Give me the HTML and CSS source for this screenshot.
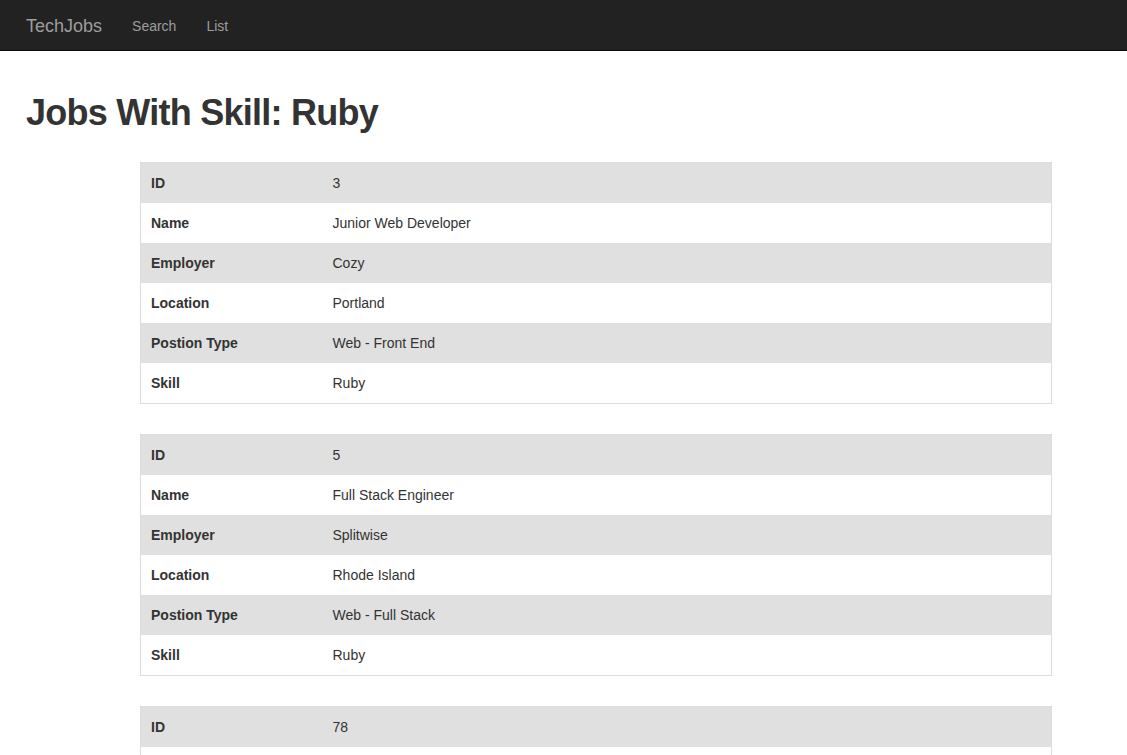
FILE: index.html
```html
<!DOCTYPE html>
<html lang="en">
<head>
<meta charset="utf-8">
<title>TechJobs</title>
<link rel="stylesheet" href="styles.css">
</head>
<body>
<nav class="navbar">
  <a class="brand" href="#">TechJobs</a>
  <ul class="nav-links">
    <li><a href="#">Search</a></li>
    <li><a href="#">List</a></li>
  </ul>
</nav>
<main class="content">
  <h1 class="title">Jobs With Skill: Ruby</h1>
  <div class="jobs">
    <table class="job">
      <tr><th>ID</th><td>3</td></tr>
      <tr><th>Name</th><td>Junior Web Developer</td></tr>
      <tr><th>Employer</th><td>Cozy</td></tr>
      <tr><th>Location</th><td>Portland</td></tr>
      <tr><th>Postion Type</th><td>Web - Front End</td></tr>
      <tr><th>Skill</th><td>Ruby</td></tr>
    </table>
    <table class="job">
      <tr><th>ID</th><td>5</td></tr>
      <tr><th>Name</th><td>Full Stack Engineer</td></tr>
      <tr><th>Employer</th><td>Splitwise</td></tr>
      <tr><th>Location</th><td>Rhode Island</td></tr>
      <tr><th>Postion Type</th><td>Web - Full Stack</td></tr>
      <tr><th>Skill</th><td>Ruby</td></tr>
    </table>
    <table class="job">
      <tr><th>ID</th><td>78</td></tr>
      <tr><th>Name</th><td>Ruby Developer</td></tr>
      <tr><th>Employer</th><td>LaunchCode</td></tr>
      <tr><th>Location</th><td>St. Louis</td></tr>
      <tr><th>Postion Type</th><td>Web - Back End</td></tr>
      <tr><th>Skill</th><td>Ruby</td></tr>
    </table>
  </div>
</main>
</body>
</html>
```

FILE: styles.css
```css
* { box-sizing: border-box; }
html, body { margin: 0; padding: 0; }
body {
  font-family: "Liberation Sans", Arial, Helvetica, sans-serif;
  font-size: 14px;
  line-height: 20px;
  color: #333;
  background: #fff;
}
.navbar {
  height: 51px;
  background: #222;
  border-bottom: 1px solid #080808;
  display: flex;
  align-items: center;
  padding: 2px 0 0 26px;
}
.brand {
  font-size: 18px;
  color: #9d9d9d;
  text-decoration: none;
  line-height: 20px;
  margin-right: 30px;
}
.nav-links {
  list-style: none;
  margin: 0;
  padding: 0;
  display: flex;
  gap: 30px;
}
.nav-links a {
  color: #9d9d9d;
  text-decoration: none;
  font-size: 14px;
}
.content {
  padding: 0 0 0 26px;
}
.title {
  margin: 42px 0 29px;
  font-size: 36px;
  line-height: 40px;
  font-weight: bold;
  letter-spacing: -0.75px;
  color: #333;
}
.jobs {
  margin-left: 114px;
  width: 912px;
  display: flex;
  flex-direction: column;
  gap: 30px;
}
.job {
  width: 912px;
  border-collapse: collapse;
  border: 1px solid #ddd;
}
.job th, .job td {
  height: 40px;
  padding: 10px;
  text-align: left;
  vertical-align: middle;
}
.job th {
  width: 182px;
  font-weight: bold;
}
.job tr:nth-child(odd) { background: #e0e0e0; }
```
